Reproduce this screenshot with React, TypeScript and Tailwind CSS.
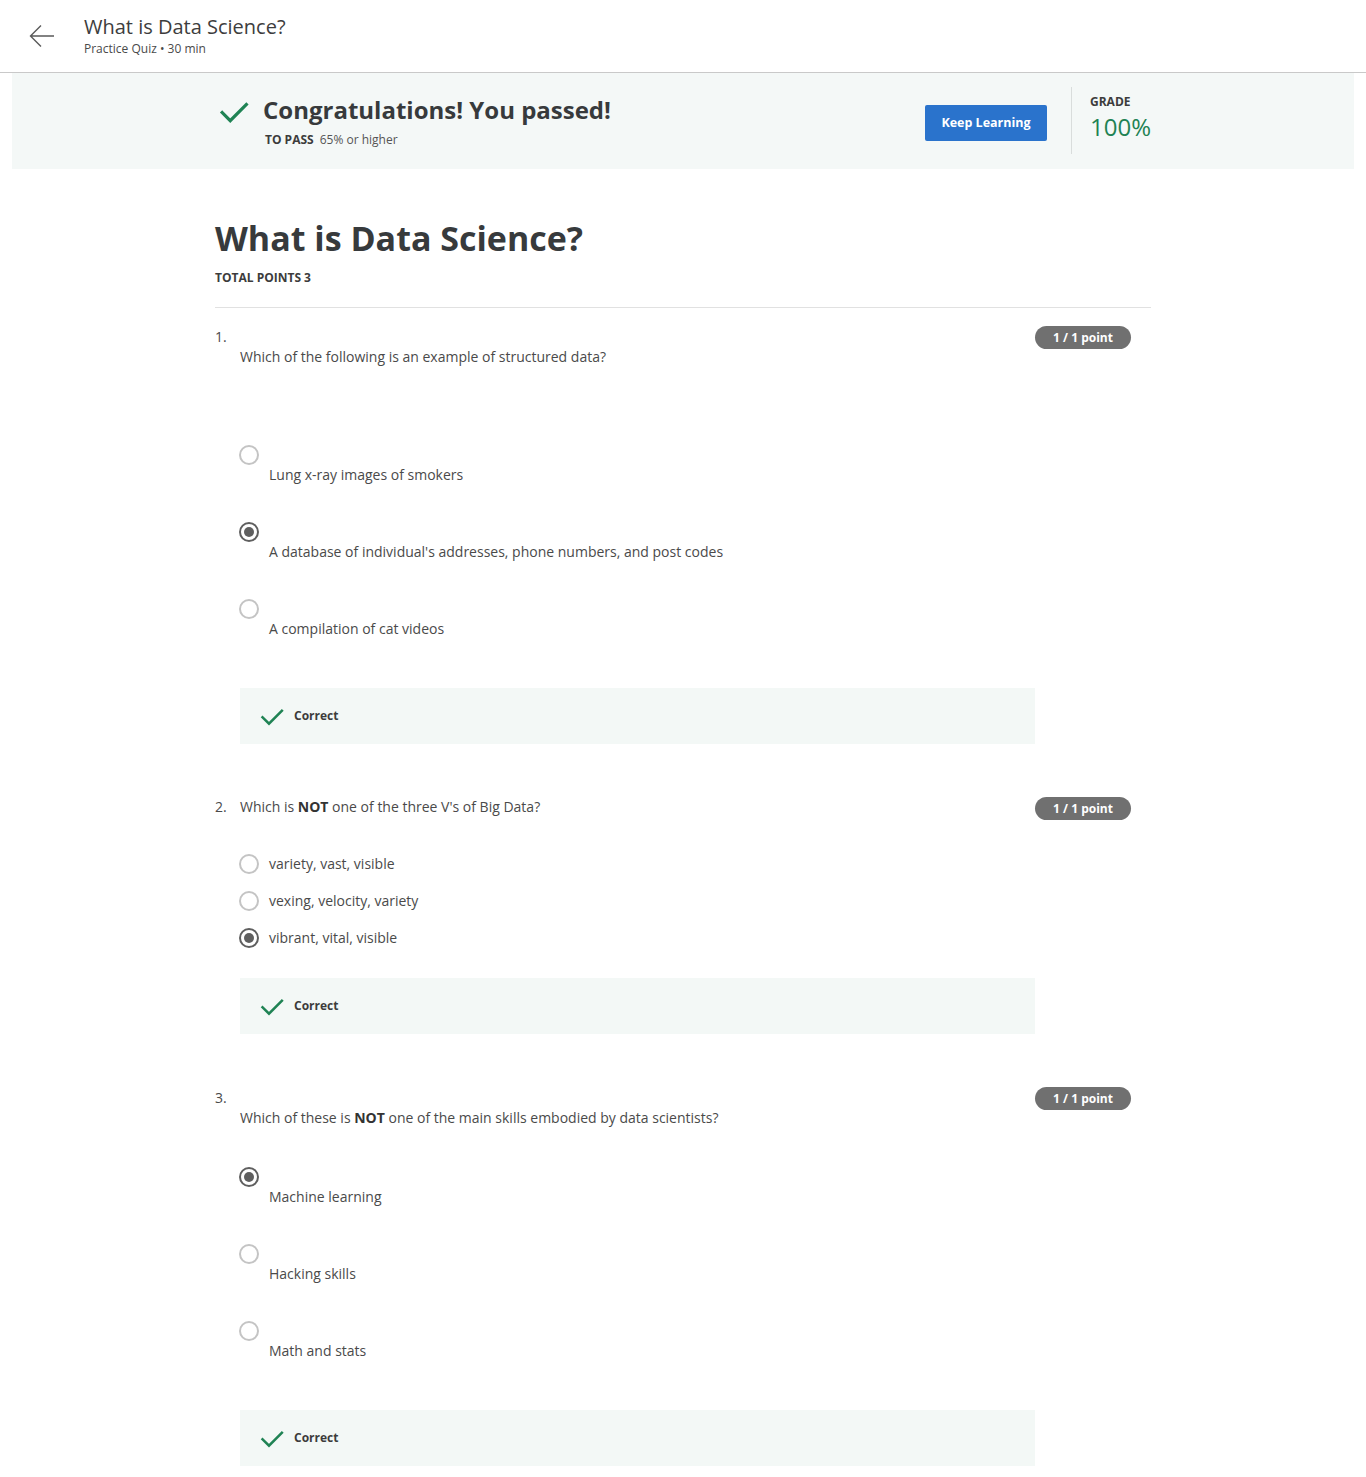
import React from 'react';

const font = { fontFamily: '"Open Sans", "Noto Sans", Arial, sans-serif' };

function Check({ size = 28 }: { size?: number }) {
  return (
    <svg width={size} height={size} viewBox="0 0 28 28" fill="none">
      <path d="M3 15.5 L10.5 23 L25.5 8" stroke="#1f8354" strokeWidth="3" strokeLinecap="square" />
    </svg>
  );
}

function Radio({ checked }: { checked?: boolean }) {
  if (checked) {
    return (
      <span className="flex h-5 w-5 shrink-0 items-center justify-center rounded-full border-2 border-[#5f5f5f]">
        <span className="h-[10px] w-[10px] rounded-full bg-[#5f5f5f]" />
      </span>
    );
  }
  return <span className="block h-5 w-5 shrink-0 rounded-full border-2 border-[#c4c4c4]" />;
}

function Badge() {
  return (
    <span className="mr-5 flex h-[23px] w-24 shrink-0 items-center justify-center rounded-full bg-[#707070] text-[12px] font-bold text-white">
      1 / 1 point
    </span>
  );
}

function CorrectBox({ className }: { className: string }) {
  return (
    <div className={`ml-[25px] flex h-14 w-[795px] items-center bg-[#f3f8f6] pl-5 ${className}`}>
      <Check size={24} />
      <span className="ml-[10px] text-[12px] font-bold text-[#3c3c3c]">Correct</span>
    </div>
  );
}

function StackedOption({ label, checked, first }: { label: string; checked?: boolean; first?: boolean }) {
  return (
    <div className={first ? '' : 'mt-[37px]'}>
      <Radio checked={checked} />
      <div className="pl-[30px] text-[14px] leading-5 text-[#4a4a4a]">{label}</div>
    </div>
  );
}

function InlineOption({ label, checked, first }: { label: string; checked?: boolean; first?: boolean }) {
  return (
    <div className={`flex items-center gap-[10px] ${first ? '' : 'mt-[17px]'}`}>
      <Radio checked={checked} />
      <span className="text-[14px] leading-5 text-[#4a4a4a]">{label}</span>
    </div>
  );
}

export default function App() {
  return (
    <div className="min-h-[1477px] bg-white text-[#373a3c]" style={font}>
      <header className="flex h-[73px] items-center border-b border-[#c9c9c9]">
        <div className="ml-[28px]">
          <svg width="28" height="28" viewBox="0 0 28 28" fill="none">
            <path d="M26 14 H3 M13 3.5 L2.5 14 L13 24.5" stroke="#5a5a5a" strokeWidth="1.4" />
          </svg>
        </div>
        <div className="ml-[28px] -mt-[2px]">
          <div className="text-[20px] leading-7 text-[#3d3d3d]">What is Data Science?</div>
          <div className="text-[12px] leading-4 text-[#4a4a4a]">Practice Quiz • 30 min</div>
        </div>
      </header>

      <div className="mx-3 h-24 bg-[#f4f8f7]">
        <div className="mx-auto flex h-full w-[936px] items-start">
          <div className="ml-1 mt-[23px]">
            <Check size={30} />
          </div>
          <div className="ml-[14px] mt-[21px]">
            <div className="text-[24px] font-bold leading-8 text-[#373a3c]">Congratulations! You passed!</div>
            <div className="mt-[6px] flex text-[12px] leading-4">
              <span className="ml-[2px] font-bold text-[#3c3c3c]">TO PASS</span>
              <span className="ml-[6px] text-[#555]">65% or higher</span>
            </div>
          </div>
          <div className="ml-auto flex items-start">
            <button className="mt-[32px] flex h-9 w-[122px] items-center justify-center rounded-[2px] bg-[#2a73cc] text-[12.5px] font-bold text-white">
              Keep Learning
            </button>
            <div className="ml-6 mt-[14px] h-[67px] w-px bg-[#d9dddc]" />
            <div className="ml-[18px] mt-[21px] w-[61px]">
              <div className="text-[12px] font-bold leading-4 text-[#3c3c3c]">GRADE</div>
              <div className="mt-[3px] text-[24px] leading-7 text-[#1f8354]">100%</div>
            </div>
          </div>
        </div>
      </div>

      <main className="mx-auto w-[936px]">
        <h1 className="mt-[45px] text-[34px] font-bold leading-[48px] text-[#373a3c]">What is Data Science?</h1>
        <div className="mt-[8px] text-[12px] font-bold leading-4 text-[#3c3c3c]">TOTAL POINTS 3</div>
        <div className="mt-[21px] h-px bg-[#e1e1e1]" />

        {/* Question 1 */}
        <div className="mt-[18px] flex justify-between">
          <div className="pt-px">
            <div className="text-[14px] leading-5 text-[#4a4a4a]">1.</div>
            <div className="pl-[25px] text-[14px] leading-5 text-[#4a4a4a]">
              Which of the following is an example of structured data?
            </div>
          </div>
          <Badge />
        </div>
        <div className="mt-[78px] pl-6">
          <StackedOption first label="Lung x-ray images of smokers" />
          <StackedOption checked label="A database of individual's addresses, phone numbers, and post codes" />
          <StackedOption label="A compilation of cat videos" />
        </div>
        <CorrectBox className="mt-[49px]" />

        {/* Question 2 */}
        <div className="mt-[53px] flex justify-between">
          <div className="flex text-[14px] leading-5 text-[#4a4a4a]">
            <span className="w-[25px]">2.</span>
            <span>
              Which is <b className="text-[#333]">NOT</b> one of the three V's of Big Data?
            </span>
          </div>
          <Badge />
        </div>
        <div className="mt-[34px] pl-6">
          <InlineOption first label="variety, vast, visible" />
          <InlineOption label="vexing, velocity, variety" />
          <InlineOption checked label="vibrant, vital, visible" />
        </div>
        <CorrectBox className="mt-[30px]" />

        {/* Question 3 */}
        <div className="mt-[53px] flex justify-between">
          <div className="pt-px">
            <div className="text-[14px] leading-5 text-[#4a4a4a]">3.</div>
            <div className="pl-[25px] text-[14px] leading-5 text-[#4a4a4a]">
              Which of these is <b className="text-[#333]">NOT</b> one of the main skills embodied by data scientists?
            </div>
          </div>
          <Badge />
        </div>
        <div className="mt-[39px] pl-6">
          <StackedOption first checked label="Machine learning" />
          <StackedOption label="Hacking skills" />
          <StackedOption label="Math and stats" />
        </div>
        <CorrectBox className="mt-[49px]" />
      </main>
    </div>
  );
}
